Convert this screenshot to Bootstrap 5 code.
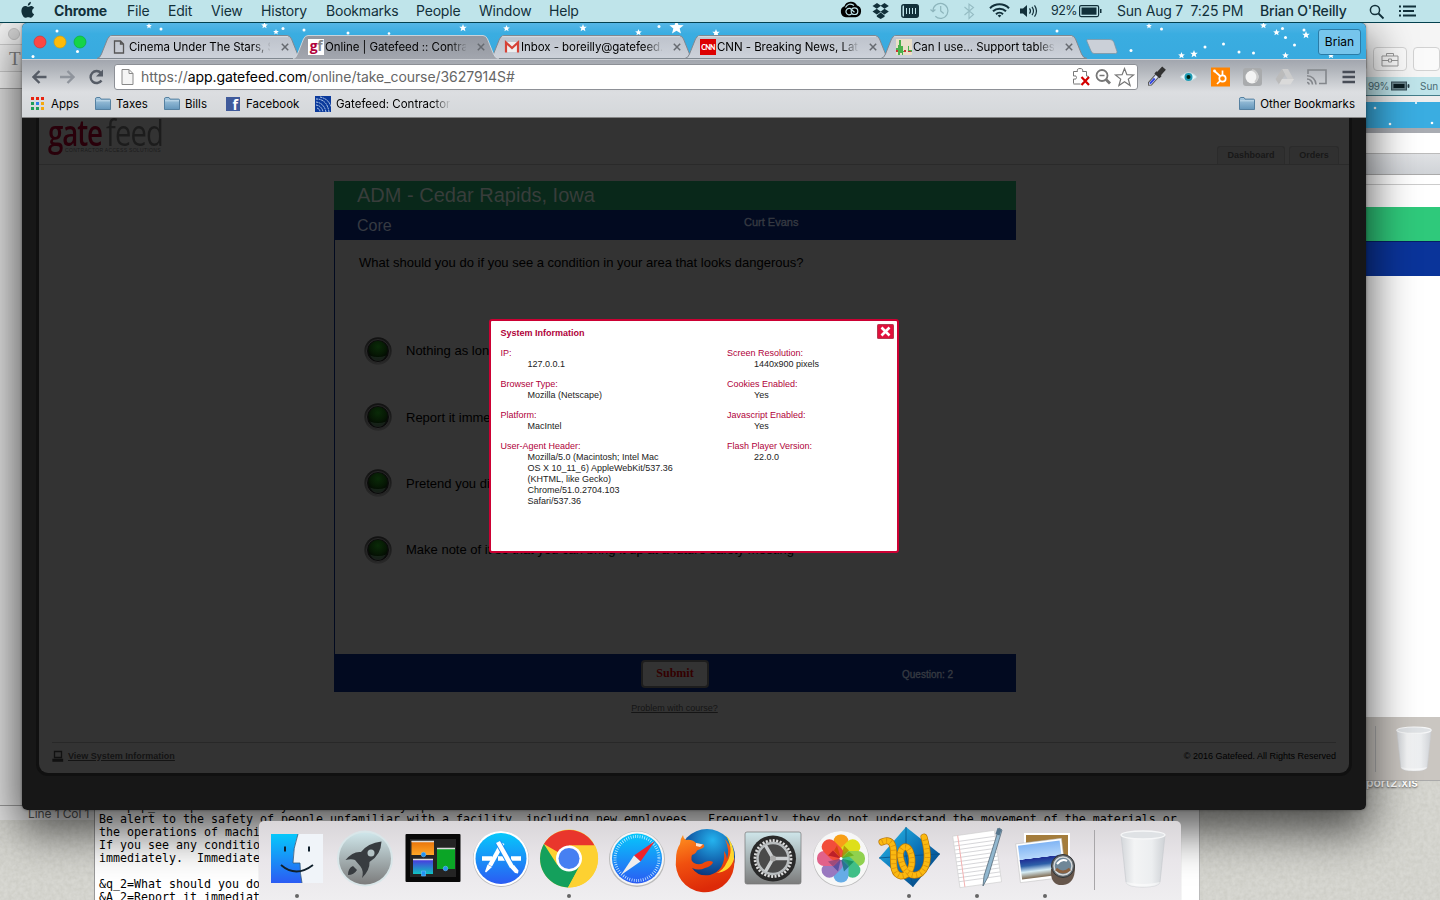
<!DOCTYPE html>
<html lang="en">
<head>
<meta charset="utf-8">
<title>Online | Gatefeed</title>
<meta name="viewport" content="width=device-width, initial-scale=1">
<link href="https://cdn.jsdelivr.net/npm/bootstrap@5.3.0/dist/css/bootstrap.min.css" rel="stylesheet">
<style>
html,body{height:100%}
body{width:1440px;height:900px;overflow:hidden;background:#cfcec8;font-family:Inter,"Liberation Sans",sans-serif;font-size:12px;line-height:1;color:#000}
svg{display:block;flex:none}
.desk{width:1440px;height:900px}
.win{position:absolute;overflow:hidden}
/* menu bar */
.menubar{height:23px;background:#bfe4ea;border-bottom:1px solid #04414f;z-index:20;font-size:14px;color:#12303a;letter-spacing:-.2px;padding-left:21px;white-space:pre}
.menubar>*{flex:none}
/* windows behind */
.editor{left:0;top:23px;width:600px;height:797px;background:#e2e2e2;border-radius:5px 5px 0 0}
.notes{left:94px;top:600px;width:1106px;height:300px;background:#fff;border-left:1px solid #999;border-right:1px solid #bbb}
.mono{font:11.63px/13px "DejaVu Sans Mono",monospace;white-space:pre;padding:200px 0 0 4px}
.shot{left:1300px;top:23px;width:140px;height:758px;background:#fff}
.tbtn{height:24px;border:1px solid #d2d2d2;border-radius:4px;background:#fafafa}
.filelabel{left:1366px;top:781px;width:74px;height:9px;line-height:3px;color:#fff;font-weight:600;font-size:12px;text-shadow:0 1px 2px #555}
/* browser */
.browser{left:22px;top:23px;width:1344px;height:787px;border-radius:5px;background:#171717;z-index:5}
.browser-shadow{position:absolute;left:22px;top:23px;width:1344px;height:787px;border-radius:5px;box-shadow:0 18px 45px 4px rgba(0,0,0,.66),0 0 3px rgba(0,0,0,.4);z-index:4}
.strip{height:36px;background:linear-gradient(#55b6e6,#3aade1 30%,#38aadf);position:relative}
.stars{position:absolute;left:0;top:0}
.ctab{width:208px;height:24px;margin-right:-12px;position:relative;padding:0 0 0 15px}
.ctab>.shape{position:absolute;left:0;top:0}
.ctab>*{position:relative}
.ctab .ttl{width:141px;overflow:hidden;white-space:nowrap;margin-left:1px;font-size:11.5px;line-height:16px;letter-spacing:-.06px;-webkit-mask-image:linear-gradient(90deg,#000 88%,transparent 101%)}
.ctab .x{margin-left:11px}
.bars{height:59px;background:linear-gradient(#a2a6ae 0,#b2b6bc 18%,#dcdee1 56%,#d4d7da 100%);border-bottom:1px solid #868686;border-top:1px solid #cdd0d5}
.omni{width:1024px;height:26px;background:#fff;border:1px solid #8d9096;border-radius:3px;flex:none}
.url{font-size:14px;letter-spacing:-.07px;color:#666;white-space:nowrap}
.bm{font-size:11.5px;line-height:16px;white-space:nowrap}
.who{width:43px;height:26px;border:1px solid #2b7ba6;border-radius:3px;background:#76c5ec;font-size:12px}
/* page */
.site{margin:0 17px;height:655px;background:#333;border-radius:0 0 9px 9px;box-shadow:0 0 0 3px #101010;clip-path:inset(0 -3px -3px -3px);font-family:"Liberation Sans",Arial,sans-serif;color:#000;position:relative}
.site-head{height:47px;border-bottom:1px solid #2a2a2a}
.brand-a{width:150px;height:28px;font:600 36px/30px "Open Sans","Liberation Sans",sans-serif;color:#29000a}
.brand-a span{display:block;flex:none;transform-origin:0 0}
.ntab{height:18px;background:#303030;border:1px solid #2b2b2b;border-bottom:0;border-radius:3px 3px 0 0;font-weight:700;font-size:9px;color:#181818}
.course{width:682px;margin:16px 0 0 295px}
.c-green{height:29px;background:#09281a;color:#383d3b;font-size:20px;padding:4px 0 0 23px}
.c-blue{height:30px;background:#020a20;color:#363a42;font-size:16px;padding:8px 0 0 23px}
.c-name{font-size:11px;margin-top:-1px;-webkit-text-stroke:.35px #363a42}
.c-body{height:414px;border-left:1px solid #020a20;padding:16px 0 0 24px;font-size:13px}
.c-foot{height:38px;background:#020a20}
.submit{width:68px;height:28px;background:#333;border:2px solid #1d1d1d;border-radius:4px;color:#330000;font:700 12px "Liberation Serif",serif}
.opt{height:66.4px;gap:14px;margin-left:5px;white-space:nowrap}
.s9{font-size:9px}
.sysinfo{left:450px;top:201px;width:410px;height:234px;background:#fff;border:2px solid #c03;border-radius:3px;font-size:9px;line-height:11px;color:#222;position:absolute;padding:7px 3px 0 9.5px}
.sysinfo dl{margin:0;width:226.5px}
.sysinfo dt{font-weight:400;color:#b0003a}
.sysinfo dd{margin:0 0 9px 27px;width:160px}
/* dock */
.dock{left:259px;top:821px;width:922px;height:79px;background:linear-gradient(#d9d6d9,#e9e6ea 50%,#efeef0);border-radius:5px 5px 0 0;z-index:10;padding-left:4px;box-shadow:0 0 1px #999}
</style>
</head>
<body>
<svg width="0" height="0" style="position:absolute"><defs>
<filter id="paper" x="0" y="0" width="100%" height="100%"><feTurbulence type="fractalNoise" baseFrequency=".25" numOctaves="3" seed="4"/><feColorMatrix values="0 0 0 0 .4  0 0 0 0 .4  0 0 0 0 .36  .5 0 0 0 -.14"/></filter>
<linearGradient id="fold" x2="0" y2="1"><stop stop-color="#a9cbe2"/><stop offset="1" stop-color="#6496bb"/></linearGradient>
<linearGradient id="tabg" x2="0" y2="1"><stop stop-color="#bdc2cb"/><stop offset="1" stop-color="#cdd2da"/></linearGradient>
<linearGradient id="tabon" x2="0" y2="1"><stop stop-color="#92969f"/><stop offset="1" stop-color="#a2a6ae"/></linearGradient>
<radialGradient id="led" cx=".5" cy=".3" r=".7"><stop stop-color="#0a2b08"/><stop offset=".6" stop-color="#061804"/><stop offset="1" stop-color="#020602"/></radialGradient>
<linearGradient id="ring" x2="0" y2="1"><stop stop-color="#111"/><stop offset="1" stop-color="#292929"/></linearGradient>
<linearGradient id="bl" x2="0" y2="1"><stop stop-color="#06c8fb"/><stop offset="1" stop-color="#2b5bf3"/></linearGradient>
<linearGradient id="gr" x2="0" y2="1"><stop stop-color="#cfe6ea"/><stop offset="1" stop-color="#7c7c7c"/></linearGradient>
<linearGradient id="or" x2="0" y2="1"><stop stop-color="#e8720a"/><stop offset="1" stop-color="#ffa726"/></linearGradient>
<linearGradient id="pu" x2="0" y2="1"><stop stop-color="#4b35e0"/><stop offset="1" stop-color="#0fc3c0"/></linearGradient>
<radialGradient id="ff" cx=".6" cy=".2" r=".8"><stop stop-color="#25b3ee"/><stop offset=".5" stop-color="#1261ac"/><stop offset="1" stop-color="#0b1c5c"/></radialGradient>
<linearGradient id="fx" x2=".3" y2="1"><stop stop-color="#ff9320"/><stop offset=".5" stop-color="#f0500f"/><stop offset="1" stop-color="#dd2a08"/></linearGradient>
<linearGradient id="bin"><stop stop-color="#d3d6da"/><stop offset=".3" stop-color="#f3f4f5"/><stop offset=".7" stop-color="#eceef0"/><stop offset="1" stop-color="#ced1d5"/></linearGradient>
<linearGradient id="sea" x2="0" y2="1"><stop stop-color="#82b5f4"/><stop offset=".42" stop-color="#b5d7fb"/><stop offset=".43" stop-color="#1f2f96"/><stop offset=".62" stop-color="#2d5fa8"/><stop offset=".8" stop-color="#d6edf5"/><stop offset="1" stop-color="#7e6a50"/></linearGradient>
<linearGradient id="dia" x2="1" y2="1"><stop stop-color="#2bc0ea"/><stop offset=".5" stop-color="#0b72b8"/><stop offset="1" stop-color="#033a72"/></linearGradient>
<symbol id="folder" viewBox="0 0 16 14"><path d="M.5 12.5V2.2Q.5.5 1.8.5H5l1 1.6h8.5q1 0 1 1v9.4z" fill="url(#fold)" stroke="#5580a0"/><path d="M1 3.8h14" stroke="#c5dceb"/></symbol>
<symbol id="star" viewBox="-10 -10 20 20"><path d="M0-10 2.6-3.4 9.5-3 4.2 1.4 6 8.1 0 4.4-6 8.1-4.2 1.4-9.5-3-2.6-3.4z" fill="#fff"/></symbol>
<symbol id="cls" viewBox="0 0 8 8"><path d="M.8.8 7.2 7.2M7.2.8.8 7.2" stroke="#666a70" stroke-width="1.5"/></symbol>
<symbol id="trash" viewBox="0 0 46 58"><path d="M1 5 6 52q1 5 17 5t17-5L45 5z" fill="url(#bin)" stroke="#c9ccd0" stroke-width=".7"/><ellipse cx="23" cy="5" rx="22" ry="4" fill="#dfe2e5" stroke="#f6f7f8" stroke-width="1.300"/><path d="M6 52q1 5 17 5t17-5q-17 4-34 0z" fill="#fff" opacity=".5"/></symbol>
<symbol id="tab" viewBox="0 0 208 24"><path d="M0 23.500Q3 23 4.500 19L10.500 4Q12 .5 15 .5H190Q193 .5 194.500 4L200.500 19Q202 23 206 23.500z" fill="url(#tabg)" stroke="#808890"/><path d="M13 1.700H191" stroke="#dfe3e8" stroke-width=".8"/></symbol>
<symbol id="tabactive" viewBox="0 0 208 24"><path d="M0 24Q3 23 4.500 19L10.500 4Q12 .5 15 .5H190Q193 .5 194.500 4L200.500 19Q202 23 206 24z" fill="url(#tabon)"/><path d="M0 24Q3 23 4.500 19L10.500 4Q12 .5 15 .5H190Q193 .5 194.500 4L200.500 19Q202 23 206 24" fill="none" stroke="#d5d9de" stroke-width=".9"/></symbol>
<symbol id="ledb" viewBox="0 0 28 28"><circle cx="14" cy="14" r="13.700" fill="url(#ring)"/><circle cx="14" cy="14" r="11.500" fill="#0b0b0b" stroke="#303030" stroke-width=".8"/><circle cx="14" cy="13.500" r="9.700" fill="url(#led)"/><path d="M6 18.500q8 3 16 0-3 5.500-8 5.500t-8-5.500z" fill="#26332a" opacity=".55"/></symbol>
</defs></svg>

<main class="desk position-relative overflow-hidden">
<svg class="win" style="left:0;top:0" width="1440" height="900"><rect width="1440" height="900" fill="#d8d8d2"/><rect width="1440" height="900" filter="url(#paper)" opacity=".8"/></svg>

<nav class="menubar position-relative d-flex align-items-center">
<svg width="33" height="22" viewBox="0 0 33 22" fill="#12303a"><path d="M11.800 6.300c-.7 0-1.700-.8-2.900-.8-2.100 0-4 1.700-4 4.800 0 3.400 2.300 7 4 7 1 0 1.500-.6 2.800-.6s1.700.6 2.700.6c1.500 0 2.700-2.300 3.200-3.700-2.700-1.200-2.600-5 .1-6.200-.9-1.300-2.100-1.900-3.200-1.900-1.200 0-2 .8-2.700.8zM11.300 5.200c-.1-2 1.400-3.700 3.100-3.900.2 2-1.300 3.800-3.100 3.900z" transform="translate(-4.500 .5)"/></svg>
<b style="width:73px">Chrome</b><span style="width:41px">File</span><span style="width:43px">Edit</span><span style="width:50px">View</span><span style="width:65px">History</span><span style="width:90px">Bookmarks</span><span style="width:63px">People</span><span style="width:70px">Window</span><span style="width:290px">Help</span>
<svg width="33" height="22" viewBox="840 0 33 22" fill="none" stroke="#12303a"><path d="M847 16.500a5 5 0 0 1-1-9.700A6.200 6.200 0 0 1 857.500 6a5.400 5.400 0 0 1-.7 10.500z" fill="#000" stroke="#000" stroke-width="1.500"/><g stroke="#bfe4ea" stroke-width="1.200"><circle cx="855.500" cy="11.200" r="3.300"/><path d="M852.500 14a3.300 3.300 0 1 1-1.500-5.600l4.500 3.800M846.500 7.500q3-5.500 8.500-2"/></g></svg>
<svg width="28" height="22" viewBox="872 0 28 22" fill="#12303a"><path d="m877 3 4 2.700-4.200 3L872.500 6zm7.500 0 4.300 3-4.300 2.700-4-3zM872.500 11.500l4.300-2.800 4 3-4 2.700zM884.500 8.700l4.300 2.800-4.300 2.900-4-2.700zM880.700 12.500l3.900 3v1.300l-3.900 2.200-3.900-2.200v-1.300z"/></svg>
<svg width="29" height="22" viewBox="900 0 29 22"><rect x="901.800" y="4.700" width="16.500" height="12.600" rx="2" fill="#bfe4ea" stroke="#12303a" stroke-width="1.400"/><rect x="904" y="5" width="14" height="12" fill="#12303a"/><path d="M906.500 8v6M909.500 8v6M912.500 8v6M915.500 8v6" stroke="#bfe4ea"/></svg>
<svg width="34" height="22" viewBox="929 0 34 22" fill="none" stroke="#8db5bc" stroke-width="1.200"><path d="M933 11a7.500 7.500 0 1 1 2.300 5.300M930.500 9.500l2.500 2.300 2.400-2.300M940.700 6v5l3 2.500"/></svg>
<svg width="26" height="22" viewBox="963 0 26 22" fill="none" stroke="#95bcc3" stroke-width="1.100"><path d="m964.500 7 9 7.500-4.500 4V4l4.500 3.500-9 7.500"/></svg>
<svg width="31" height="22" viewBox="989 0 31 22" fill="none" stroke="#12303a" stroke-width="2"><path d="M990 8.200a13.500 13.500 0 0 1 19 0M993 11.300a9.300 9.300 0 0 1 13 0M996 14.200a5 5 0 0 1 7 0"/><path d="M997.700 15.500a2.600 2.600 0 0 1 3.600 0l-1.800 2z" fill="#12303a" stroke="none"/></svg>
<svg width="31" height="22" viewBox="1020 0 31 22" fill="#12303a"><path d="M1020 8.500h3l4-3.500v12l-4-3.500h-3z"/><path d="M1029.500 8.300q2 2.700 0 5.400M1032 6.800q3 4.200 0 8.400M1034.500 5.300q4 5.700 0 11.400" fill="none" stroke="#12303a" stroke-width="1.200"/></svg>
<span style="width:28px;font-size:12.500px;letter-spacing:-.6px">92%</span>
<svg width="38" height="22" viewBox="1079 0 38 22"><rect x="1079.600" y="5.600" width="19" height="11" rx="1.500" fill="none" stroke="#12303a" stroke-width="1.200"/><rect x="1081.500" y="7.500" width="15" height="7.200" fill="#12303a"/><path d="M1100 9h1.500v4h-1.500z" fill="#12303a"/></svg>
<span style="width:143px">Sun Aug 7  7:25 PM</span><span style="width:109px;font-weight:500;letter-spacing:-.2px">Brian O'Reilly</span>
<svg width="50" height="22" viewBox="1369 0 50 22" fill="none" stroke="#12303a" stroke-width="1.500"><circle cx="1375" cy="10" r="4.600"/><path d="m1378.500 13.500 5 5M1399 6.500h2M1403 6.500h13M1399 11h2M1403 11h11M1399 15.500h2M1403 15.500h13" stroke-width="1.800"/></svg>
</nav>

<section class="win editor">
<div style="height:22px;background:#f4f4f4;border-bottom:1px solid #ccc;padding:5px 0 0 8px"><svg width="12" height="12"><circle cx="6" cy="6" r="5.500" fill="#d8d8d8" stroke="#c4c4c4"/></svg></div>
<div style="height:27px;background:#efefef;border-bottom:1px solid #ccc;font:19px 'Liberation Serif',serif;color:#858585;padding:3px 0 0 9px">T</div>
<div style="height:17px;background:#f5f5f5;border-bottom:1px solid #aaa"></div>
<div style="height:716px"></div>
<div style="height:15px;background:#e3e3e3;border-top:1px solid #999;color:#555;padding:2px 0 0 28px;letter-spacing:-.1px">Line 1 Col 1</div>
</section>

<section class="win notes"><div class="mono">&amp;stop p_2=Keep clear of any machine that may operate
Be alert to the safety of people unfamiliar with a facility, including new employees.  Frequently, they do not understand the movement of the materials or
the operations of machi
If you see any conditio
immediately.  Immediate

&amp;q_2=What should you do
&amp;A_2=Report it immediat</div></section>

<section class="win shot d-flex flex-column">
<div class="d-flex align-items-center" style="height:54px;background:#f5f5f5;padding-top:18px;gap:6px">
<div class="tbtn" style="width:76px"></div><div class="tbtn d-flex align-items-center justify-content-center" style="width:38px"><svg width="18" height="15" fill="none" stroke="#999"><path d="M1 4h16v10H1zM5.500 4V1.500h7V4M1 8.500h6M11 8.500h6M7.500 7h3v3h-3z"/></svg></div><div class="tbtn" style="width:30px"></div></div>
<div class="d-flex align-items-center" style="height:19px;background:#bfe4ea;border-bottom:1px solid #447d8a;padding-left:68px;font-size:10px;color:#4b6c75"><span style="width:23px;letter-spacing:-.4px">99%</span><svg width="29" height="10"><rect x=".5" y="1" width="15" height="8" fill="#69838a" stroke="#38515a"/><rect x="2.500" y="3" width="11" height="4" fill="#0a1c21"/><path d="M17 3.500h1v3h-1z" stroke="#38515a"/></svg>Sun</div>
<div style="height:6px;background:#eee"></div>
<svg width="140" height="26"><rect width="140" height="26" fill="#3aade1"/><g fill="#fff"><circle cx="75" cy="6" r="1.300"/><circle cx="90" cy="22" r="1.300"/><circle cx="132" cy="21" r="1.300"/><circle cx="116" cy="1" r="1"/></g></svg>
<div style="height:5px;background:#a9acb2"></div><div style="height:20px"></div>
<div style="height:22px;background:linear-gradient(#dfe1e4,#d0d3d7);border-top:1px solid #bbb;border-bottom:1px solid #aaa"></div>
<div style="height:10px;border-bottom:1px solid #ccc"></div><div style="height:22px"></div>
<div style="height:34px;background:#2fc97b"></div><div style="height:35px;background:#0a349a;border-top:1px solid #052066"></div>
<div style="height:441px"></div>
<div class="d-flex flex-fill" style="background:#cac6c1;padding:9px 0 0 75px;border-bottom:1px solid #aaa"><div style="width:21px;border-left:1px solid #aaa;height:46px"></div><svg width="36" height="46"><use href="#trash" width="36" height="46"/></svg></div>
</section>
<div class="win filelabel">port2.xls</div>
<div class="browser-shadow"></div>

<section class="win browser">
<div class="strip d-flex">
<svg class="stars" width="1344" height="36">
<g fill="#fff"><circle cx="35" cy="8" r="1.500"/><circle cx="55.500" cy="28.500" r="1.500"/><circle cx="11" cy="33.500" r="1.500"/><circle cx="139" cy="6" r="1.500"/><circle cx="261" cy="5.500" r="1.500"/><circle cx="282" cy="7" r="1.500"/><circle cx="326" cy="10" r="1.500"/><circle cx="367" cy="10.500" r="1.300"/><circle cx="637" cy="3.500" r="1.500"/><circle cx="1035" cy="8" r="1.500"/><circle cx="1109" cy="27.500" r="1.500"/><circle cx="1139.500" cy="6" r="1.500"/><circle cx="1183" cy="24" r="1.500"/><circle cx="1201.500" cy="21" r="1.500"/><circle cx="1217" cy="29" r="1.500"/><circle cx="1231.500" cy="30" r="1.500"/><circle cx="1260.500" cy="5.500" r="1.500"/><circle cx="1263.500" cy="14.500" r="1.500"/><circle cx="1272.500" cy="22" r="1.500"/><circle cx="1282" cy="7" r="1.500"/></g>
<use href="#star" x="124" y="0" width="6" height="6"/><use href="#star" x="239" y="-1" width="7" height="7"/><use href="#star" x="251" y="6" width="6" height="6"/><use href="#star" x="437" y="1" width="8" height="8"/><use href="#star" x="481" y="2" width="7" height="7"/><use href="#star" x="557" y="1" width="8" height="8"/><use href="#star" x="613" y="6" width="7" height="7"/><use href="#star" x="647" y="-3" width="15" height="15"/><use href="#star" x="690" y="6" width="8" height="8"/><use href="#star" x="1124" y="0" width="6" height="6"/><use href="#star" x="1156" y="29" width="7" height="7"/><use href="#star" x="1168" y="27" width="8" height="8"/><use href="#star" x="1238" y="-1" width="7" height="7"/><use href="#star" x="1251" y="6" width="7" height="7"/><use href="#star" x="1280" y="8" width="8" height="8"/><use href="#star" x="1260" y="29" width="7" height="7"/><use href="#star" x="1305" y="29" width="8" height="7"/>
</svg>
<svg width="75" height="36" class="position-relative"><g stroke-width=".7"><circle cx="18" cy="19" r="6" fill="#fc4744" stroke="#d8322f"/><circle cx="38" cy="19" r="6" fill="#fdbb09" stroke="#dc9d05"/><circle cx="58" cy="19" r="6" fill="#15d447" stroke="#0eae33"/></g></svg>
<div class="d-flex" style="padding-top:12px;height:36px">
<div class="ctab d-flex align-items-center"><svg class="shape" width="208" height="24"><use href="#tab" width="208" height="24"/></svg>
<svg width="16" height="16"><path d="M2.500 2h6l3 3v9h-9zM8.500 2v3h3" fill="none" stroke="#555" stroke-width="1.300"/></svg><span class="ttl">Cinema Under The Stars, Sa</span><svg class="x" width="8" height="8"><use href="#cls"/></svg></div>
<div class="ctab d-flex align-items-center" style="z-index:2"><svg class="shape" width="208" height="24"><use href="#tabactive" width="208" height="24"/></svg>
<span class="bg-white overflow-hidden text-center" style="width:16px;height:16px;font:700 14px/13px 'Open Sans';color:#888;letter-spacing:-.5px"><span style="color:#b0003a">g</span>f</span><span class="ttl">Online | Gatefeed :: Contractor</span><svg class="x" width="8" height="8"><use href="#cls"/></svg></div>
<div class="ctab d-flex align-items-center"><svg class="shape" width="208" height="24"><use href="#tab" width="208" height="24"/></svg>
<svg width="16" height="16"><path d="M1 3h14v10H1z" fill="#eee"/><path d="M2 13.500V3.500l6 5.500 6-5.500v10" fill="none" stroke="#d64237" stroke-width="2.200"/></svg><span class="ttl">Inbox - boreilly@gatefeed.com</span><svg class="x" width="8" height="8"><use href="#cls"/></svg></div>
<div class="ctab d-flex align-items-center"><svg class="shape" width="208" height="24"><use href="#tab" width="208" height="24"/></svg>
<span class="text-white text-center" style="background:#d00;width:16px;height:16px;font:900 7px/16px Lato;letter-spacing:-.6px">CNN</span><span class="ttl">CNN - Breaking News, Latest</span><svg class="x" width="8" height="8"><use href="#cls"/></svg></div>
<div class="ctab d-flex align-items-center"><svg class="shape" width="208" height="24"><use href="#tab" width="208" height="24"/></svg>
<svg width="16" height="16"><path d="M0 0h16v16H0z" fill="#e9dfc9"/><path d="M0 13V9h2V6h1V1h2v6h2v5h2v1h3V7h1v4h3v2H7v3H6v-2H4v2H2v-3z" fill="#49b04a"/><path d="M0 11h2v2H0zM8 11h2v2H8zM12 12h3v1h-3z" fill="#c33"/></svg><span class="ttl">Can I use... Support tables for</span><svg class="x" width="8" height="8"><use href="#cls"/></svg></div>
<svg class="position-relative" width="32" height="20" style="margin:3px 0 0 9px"><path d="M1.500 1.500H24q3 0 4 3l3 9q.5 2-1.500 2H8q-2 0-3-2.500L.8 3Q.6 1.500 1.500 1.500z" fill="#cbd0d8" stroke="#7f96a4" stroke-width=".8"/></svg>
</div>
<div class="who ms-auto d-flex align-items-center justify-content-center position-relative" style="margin:6px 5px 0 0">Brian</div>
</div>
<div class="bars">
<div class="d-flex align-items-center" style="height:34px;padding-left:10px">
<svg width="82" height="18" fill="none" stroke="#565c66" stroke-width="2.400"><path d="M14.500 9H2M7.500 3 1.500 9l6 6"/><path d="M28 9h13M35.500 3l6 6-6 6" stroke="#8f949c"/><path d="M69.500 12.500a6 6 0 1 1-.5-7.500"/><path d="M71 1.500v7h-7z" fill="#565c66" stroke="none"/></svg>
<div class="omni d-flex align-items-center"><svg width="26" height="18"><path d="M7 1.500h7l4 4v11H7zM14 1.500v4h4" fill="#f5f5f5" stroke="#888"/></svg><span class="url">https://<span class="text-black">app.gatefeed.com</span>/online/take_course/3627914S#</span>
<svg class="ms-auto" width="65" height="20" viewBox="-1 0 65 20" fill="none" stroke="#777"><path d="M.5 16.500V12q3 1 3-1.500T.5 9V4.500h4q-1-3 2.500-3t2.500 3h4V9q2.500-.5 2 2"/><path d="M.5 17h7" /><path d="m8.500 10 7.500 8m0-8-7.500 8" stroke="#d40000" stroke-width="2.200"/><circle cx="29" cy="8.500" r="5.500" stroke-width="1.800"/><path d="m33 12.500 4 4" stroke-width="2.800"/><path d="M26.500 8.500h5" stroke-width="1.500"/><path d="m51.500 1.500 2.400 6.200 6.600.3-5.200 4.100 1.800 6.400-5.600-3.700-5.600 3.700 1.800-6.400L42.500 8l6.600-.3z" stroke-width="1.200"/></svg></div>
<svg style="margin-left:8px" width="212" height="22" viewBox="1146 0 212 22"><g transform="rotate(42 1156 11)"><path d="M1154 9h4v11l-2 2-2-2z" fill="#dde3f5" stroke="#555"/><path d="M1155 13h2v7h-2z" fill="#3345dd"/><path d="M1152.500 6.500h7v3h-7zM1153.500-1h5v8h-5z" fill="#333"/></g><path d="M1180 11q9-9 17 0-8 8-17 0z" fill="#e7f4f8" stroke="#c5d3d8"/><circle cx="1188.500" cy="11" r="4" fill="#1d9bb5"/><circle cx="1188.500" cy="11" r="2" fill="#021"/><path d="M1211 1.500h19v19h-19z" fill="#ff8400"/><g fill="none" stroke="#fff" stroke-width="1.700"><circle cx="1222.500" cy="12.500" r="3.200"/><path d="m1214.500 5 5.500 5M1222.500 9V4.500M1220 15l-3 3"/></g><circle cx="1214.500" cy="5" r="1.400" fill="#fff"/><rect x="1243" y="2" width="19" height="18" rx="3" fill="#a9abad"/><circle cx="1252" cy="11" r="6.500" fill="#f3f3f3"/><path d="M1252 4a7 7 0 0 1 3 12" stroke="#ccc" fill="none" stroke-width="2"/><path d="M1282 3h6l6 11h-6z" fill="#ccc"/><path d="m1282 3 3 5.500-6 10-3.500-5.500z" fill="#bbb"/><path d="M1282 13h12l-3.500 5.500H1279z" fill="#dadada"/><g fill="none" stroke="#83868b" stroke-width="1.600"><path d="M1308 8V4h18v13.500h-7M1307 16.500a2 2 0 0 1 2 2M1307 13a5.500 5.500 0 0 1 5.500 5.500M1307 9.700a9 9 0 0 1 9 8.800"/></g><path d="M1342.500 6h12.500M1342.500 11h12.500M1342.500 16h12.500" stroke="#484d57" stroke-width="2.600"/></svg>
</div>
<div class="d-flex align-items-center bm" style="height:20px;padding:0 11px 0 9px">
<svg width="20" height="14"><g fill="#e8230f"><path d="M0 0h3v3H0zM5 0h3v3H5zM10 0h3v3h-3z"/></g><path d="M0 5h3v3H0zM0 10h3v3H0z" fill="#1e9d58"/><path d="M5 5h3v3H5z" fill="#2c7fe8"/><path d="M5 10h3v3H5z" fill="#1e9d58"/><path d="M10 5h3v3h-3zM10 10h3v3h-3z" fill="#f5a80c"/></svg><span style="width:44px">Apps</span>
<svg width="21" height="14"><use href="#folder" width="16" height="14"/></svg><span style="width:48px">Taxes</span>
<svg width="21" height="14"><use href="#folder" width="16" height="14"/></svg><span style="width:41px">Bills</span>
<span class="text-white text-end" style="width:14px;height:14px;padding-right:2px;background:#3f5a9b;font:700 14px/16px 'Open Sans';overflow:hidden">f</span><span style="width:69px;margin-left:6px">Facebook</span>
<svg width="21" height="16"><path d="M0 0h16v16H0z" fill="#0b3a9c"/><g fill="none" stroke="#c9dcf5" stroke-width=".9" stroke-dasharray="2 .6"><path d="M1 3q11 0 13 13M1 6q8 1 10 10M1 9q6 1 7 7M2 12q3 1 3 4M5 1q9 2 11 10"/></g></svg><span style="width:115px;overflow:hidden;-webkit-mask-image:linear-gradient(90deg,#000 84%,transparent 100%)">Gatefeed: Contractor</span>
<svg class="ms-auto" width="21" height="14"><use href="#folder" width="16" height="14"/></svg><span>Other Bookmarks</span>
</div></div>

<div class="site">
<header class="site-head d-flex justify-content-between">
<div style="padding-left:9px"><div class="brand-a d-flex"><span style="width:58px;letter-spacing:-1.500px;transform:scaleX(.77)">gate</span><span style="color:#1c1c1c;font-weight:400;letter-spacing:-1.100px;transform:scaleX(.81)">feed</span></div><div style="font-size:5px;color:#1b1b1b;padding-left:17px;letter-spacing:.32px;line-height:8px;white-space:nowrap">CONTRACTOR ACCESS SOLUTIONS</div></div>
<div class="d-flex align-items-end" style="gap:4px;padding-right:10px"><div class="ntab d-flex align-items-center justify-content-center" style="width:68px">Dashboard</div><div class="ntab d-flex align-items-center justify-content-center" style="width:50px">Orders</div></div>
</header>
<article class="course">
<div class="c-green">ADM - Cedar Rapids, Iowa</div>
<div class="c-blue d-flex"><span style="width:387px">Core</span><span class="c-name">Curt Evans</span></div>
<div class="c-body"><div style="height:61.500px">What should you do if you see a condition in your area that looks dangerous?</div>
<div class="opt d-flex align-items-center"><svg width="28" height="28"><use href="#ledb"/></svg>Nothing as long as it is not yours</div>
<div class="opt d-flex align-items-center"><svg width="28" height="28"><use href="#ledb"/></svg>Report it immediately</div>
<div class="opt d-flex align-items-center"><svg width="28" height="28"><use href="#ledb"/></svg>Pretend you didn't see it</div>
<div class="opt d-flex align-items-center"><svg width="28" height="28"><use href="#ledb"/></svg>Make note of it so that you can bring it up at a future safety meeting</div></div>
<div class="c-foot d-flex align-items-center"><div style="width:307px"></div><div class="submit d-flex align-items-center justify-content-center" style="margin-top:1px">Submit</div><span style="margin:3px 0 0 193px;font-size:10px;color:#363a42;-webkit-text-stroke:.35px #363a42">Question: 2</span></div>
<div class="s9 text-center" style="padding:12px 1px 0 0;height:50px;color:#151515"><span class="text-decoration-underline">Problem with course?</span></div>
</article>
<footer class="d-flex align-items-center justify-content-between s9" style="margin:0 13px;border-top:1px solid #282828;height:27px">
<div class="d-flex align-items-center fw-bold" style="color:#141414"><svg width="16" height="12"><path d="M2.500 1.500h7v6h-7zM1 9.500h9.500v1.500H1z" fill="none" stroke="#111" stroke-width="1.300"/></svg><span class="text-decoration-underline">View System Information</span></div><span>© 2016 Gatefeed. All Rights Reserved</span>
</footer>
<div class="sysinfo">
<div class="d-flex justify-content-between" style="height:20px"><b style="color:#b0003a">System Information</b><svg width="17" height="15" style="margin-top:-4px"><rect width="17" height="15" rx="1.500" fill="#b63a50"/><rect x="1" y="1" width="15" height="13" fill="#e0103c"/><path d="m4.500 3.500 8 8m0-8-8 8" stroke="#fff" stroke-width="2.600"/></svg></div>
<div class="d-flex"><dl><dt>IP:</dt><dd>127.0.0.1</dd><dt>Browser Type:</dt><dd>Mozilla (Netscape)</dd><dt>Platform:</dt><dd>MacIntel</dd><dt>User-Agent Header:</dt><dd>Mozilla/5.0 (Macintosh; Intel Mac<br>OS X 10_11_6) AppleWebKit/537.36<br>(KHTML, like Gecko)<br>Chrome/51.0.2704.103<br>Safari/537.36</dd></dl>
<dl style="width:160px"><dt>Screen Resolution:</dt><dd>1440x900 pixels</dd><dt>Cookies Enabled:</dt><dd>Yes</dd><dt>Javascript Enabled:</dt><dd>Yes</dd><dt>Flash Player Version:</dt><dd>22.0.0</dd></dl></div>
</div>
</div>
</section>

<section class="win dock d-flex">
<svg width="68" height="79"><path d="M8 13h52v49H8z" fill="#f0f4f9"/><path d="M8 13h27q-5 14-5 29h7q0 11 2 20H8z" fill="url(#bl)"/><path d="M35 13q-5 14-5 29h7q0 11 2 20" fill="none" stroke="#33587a" stroke-width=".8"/><path d="M18 44q15 13 32 0" fill="none" stroke="#10202c" stroke-width="1.800"/><path d="M22 25.500v5M46 25.500v5" stroke="#10202c" stroke-width="2"/><circle cx="34" cy="75" r="2" fill="#666"/></svg>
<svg width="68" height="79"><circle cx="34" cy="37.500" r="28" fill="#d9e6e9"/><circle cx="34" cy="37.500" r="26" fill="url(#gr)"/><path d="M50.500 20.500Q37 22 30 31q-8-1-15.500 8 6-1.500 9.500 0l5.500 6.500Q33 50 31 57q8-8 7.500-16Q50 34 50.500 20.500zM22 45q-5 2-5 9 6 0 9-5z" fill="#383c40"/><circle cx="40" cy="32" r="3.500" fill="#b4c3c5"/></svg>
<svg width="68" height="79"><rect x="6.500" y="13" width="55" height="48" rx="1" fill="#080808"/><path d="M11 18h46v38H11z" fill="#242424"/><path d="M12.500 20h22.500v14H12.500z" fill="url(#or)"/><path d="M38 27h18v21H38z" fill="#0ba526"/><path d="M14 38.500h20V53H14z" fill="url(#pu)"/><path d="M12.500 20.500H35M38 27.500h18M14 38.500h20" stroke="#ddd" stroke-width="1.400"/><g fill="#2393f2" stroke="#69bdf8" stroke-width=".6"><circle cx="24.500" cy="33.500" r="2.300"/><circle cx="46.500" cy="47.500" r="2.300"/><path d="M22.500 50h4v5h-4z"/></g></svg>
<svg width="68" height="79"><circle cx="34" cy="38" r="28" fill="#bbb"/><circle cx="34" cy="37.500" r="27.500" fill="#fff"/><circle cx="34" cy="37.500" r="25.500" fill="url(#bl)"/><path d="M15 37.500h10M31 37.500h8M44 37.500h10" stroke="#fff" stroke-width="4.500"/><path d="M35.500 22 23 44.500" stroke="#fff" stroke-width="4.500"/><path d="m31 21 14 25" stroke="#1d8cf6" stroke-width="6.500"/><path d="m31 21 14 25" stroke="#fff" stroke-width="4.500"/><path d="m20.500 43.500 4.500 2.500-6 5.500-1-1zM43 46.500l4-2.500 4.500 5.500-.5 3-3-.5z" fill="#fff"/></svg>
<svg width="68" height="79"><circle cx="34" cy="37.500" r="29" fill="#fdd131"/><path d="M34 37.500 8.900 23A29 29 0 0 1 59.500 24.500L34 24.500z" fill="#e9362c"/><path d="M8.900 23A29 29 0 0 0 33 66.500L45 44 34 50 22 43.500z" fill="#14a05c"/><path d="M34 24.500h26A29 29 0 0 1 33 66.500L45.500 44z" fill="#fdd131"/><circle cx="34" cy="37.500" r="13" fill="#fff"/><circle cx="34" cy="37.500" r="10.500" fill="#4680f2"/><circle cx="34" cy="75" r="2" fill="#666"/></svg>
<svg width="68" height="79"><circle cx="34" cy="38" r="28" fill="#bbb"/><circle cx="34" cy="37.500" r="27" fill="#f5f5f5"/><circle cx="34" cy="37.500" r="25" fill="url(#bl)"/><circle cx="34" cy="37.500" r="22" fill="none" stroke="#d5f2ff" stroke-width="3" stroke-dasharray=".7 1.600"/><path d="m52 20-14.500 20.500-6.500-6z" fill="#f0232c"/><path d="m18 54 13-19.500 6.500 6z" fill="#eee"/></svg>
<svg width="68" height="79"><circle cx="36" cy="36" r="28" fill="url(#ff)"/><path d="M5 38q0-9 4-15 0-5 3-9 0 3 3 5 6-1 10 3l8 1.500q1 2-1 3.500l-6 2.500q-1 3-5 4.500-2 5 2 8 6 3 11-1 5-2 8 0-1 4-8 6-6 3-13 0 6 9 18 7 16-5 14-24 3 4 3 8 3-9-2-20 12 14 9 28A29 29 0 0 1 5 38z" fill="url(#fx)"/><path d="M54 13q10 15 2 28-4 9-11 11 14-1 18-14 1-15-9-25z" fill="#ffd62c"/><path d="m25 22 7 1.500-3 2.500-4-1z" fill="#fff" opacity=".8"/></svg>
<svg width="68" height="79"><rect x="6" y="11" width="56" height="52" rx="2" fill="url(#gr)" stroke="#777" stroke-width=".7"/><circle cx="34" cy="37.500" r="23" fill="#292929"/><circle cx="34" cy="37.500" r="18" fill="#444" stroke="#ddd" stroke-width="2.800" stroke-dasharray="2 1.500"/><circle cx="34" cy="37.500" r="15.500" fill="#4a4a4a" stroke="#b8bcbe" stroke-width="2.500"/><path d="M34 37.500h15M34 37.500l-7.500-13M34 37.500l-7.500 13" stroke="#c9ccce" stroke-width="3.500"/><circle cx="34" cy="37.500" r="3" fill="#aaa"/></svg>
<svg width="68" height="79"><circle cx="34" cy="38" r="28" fill="#bbb"/><circle cx="34" cy="37.500" r="27.500" fill="#f7f7f7"/><g transform="translate(34 37.500)" style="isolation:isolate"><g opacity=".95"><rect x="-7.500" y="-24" width="15" height="24" rx="7" fill="#f99b0c"/><rect x="-7.500" y="-24" width="15" height="24" rx="7" fill="#ddde0f" transform="rotate(45)"/><rect x="-7.500" y="-24" width="15" height="24" rx="7" fill="#8bd046" transform="rotate(90)"/><rect x="-7.500" y="-24" width="15" height="24" rx="7" fill="#37bd82" transform="rotate(135)"/><rect x="-7.500" y="-24" width="15" height="24" rx="7" fill="#5fa9e6" transform="rotate(180)"/><rect x="-7.500" y="-24" width="15" height="24" rx="7" fill="#9472bd" transform="rotate(225)"/><rect x="-7.500" y="-24" width="15" height="24" rx="7" fill="#e05a85" transform="rotate(270)"/><rect x="-7.500" y="-24" width="15" height="24" rx="7" fill="#f24430" transform="rotate(315)"/></g><g opacity=".75"><path d="M0 0-7-8-4-13z" fill="#c40"/><path d="M0 0 3-13 8-8z" fill="#a80"/><path d="M0 0 8-7 13-3z" fill="#6a1"/><path d="M0 0 13 3 8 8z" fill="#185"/><path d="M0 0 8 8 3 13z" fill="#167"/><path d="M0 0-3 13-8 8z" fill="#449"/><path d="M0 0-8 8-13 3z" fill="#847"/><path d="M0 0-13-3-8-8z" fill="#a12"/></g><circle r="1.500" fill="#fff"/></g></svg>
<svg width="68" height="79"><path d="m31 6 34 27-27 33L4 37z" fill="url(#dia)"/><path d="M31 6v29M65 33l-34 2 7 31M4 37l27-2" stroke="#075187" stroke-width=".8" fill="none"/><g fill="none"><path d="M7 21q9-4 11 5c2 9-3 27 8 29 11 0 13-15 9-25-4-9-12-2-9 9 3 12 11 19 20 13 9-8 7-22 3-36" stroke="#b87505" stroke-width="7" stroke-linecap="round"/><path d="M7 21q9-4 11 5c2 9-3 27 8 29 11 0 13-15 9-25-4-9-12-2-9 9 3 12 11 19 20 13 9-8 7-22 3-36" stroke="#fbb910" stroke-width="5.600" stroke-linecap="round"/><path d="M7 21q9-4 11 5c2 9-3 27 8 29 11 0 13-15 9-25-4-9-12-2-9 9 3 12 11 19 20 13 9-8 7-22 3-36" stroke="#dc930c" stroke-width="5" stroke-dasharray=".8 3.600"/></g><circle cx="34" cy="75" r="2" fill="#666"/></svg>
<svg width="68" height="79"><g transform="rotate(-8 34 37)"><path d="M13 12h42v52H13z" fill="#fff" stroke="#ccc" stroke-width=".6"/><path d="M13 18h42M13 22h42M13 26h42M13 30h42M13 34h42M13 38h42M13 42h42M13 46h42M13 50h42M13 54h42M13 58h42" stroke="#cfcfd2" stroke-width=".8"/><path d="M18 12v52" stroke="#f3b1b1"/></g><path d="m56 7 3 2-14 47-5 9 1-10z" fill="#91b7cf" stroke="#566a78" stroke-width=".8"/><path d="m54.500 7 4 1.500-2 6-4-1.500z" fill="#55758c"/><circle cx="34" cy="75" r="2" fill="#666"/></svg>
<svg width="68" height="79"><path d="M13 12h46v38H13z" fill="#fff"/><path d="M15 14h42v34H15z" fill="#a47c3c"/><g transform="rotate(-7 30 40)"><path d="M7 20h46v39H7z" fill="#fff" stroke="#bbb" stroke-width=".5"/><path d="M9 22h42v34H9z" fill="url(#sea)"/></g><path d="M40 48q-1 14 8 16h4q12-1 12-18z" fill="#66564b"/><circle cx="52" cy="45" r="11.500" fill="#656c70" stroke="#333"/><circle cx="52" cy="45" r="9" fill="#6f8798" stroke="#d5d9db" stroke-width="1.500"/><path d="M46 43q5-6 10-3" stroke="#fff" stroke-width="2" fill="none"/><path d="M45 48q7 6 14 0" stroke="#8a6140" stroke-width="3" fill="none"/><circle cx="34" cy="75" r="2" fill="#666"/></svg>
<div style="width:16px;flex:none;margin-top:9px;height:60px;border-right:1px solid #a8a6a9"></div>
<svg width="46" height="58" style="margin:9px 0 0 25px"><use href="#trash"/></svg>
</section>
</main>
<script src="https://cdn.jsdelivr.net/npm/bootstrap@5.3.0/dist/js/bootstrap.bundle.min.js"></script>
</body>
</html>
